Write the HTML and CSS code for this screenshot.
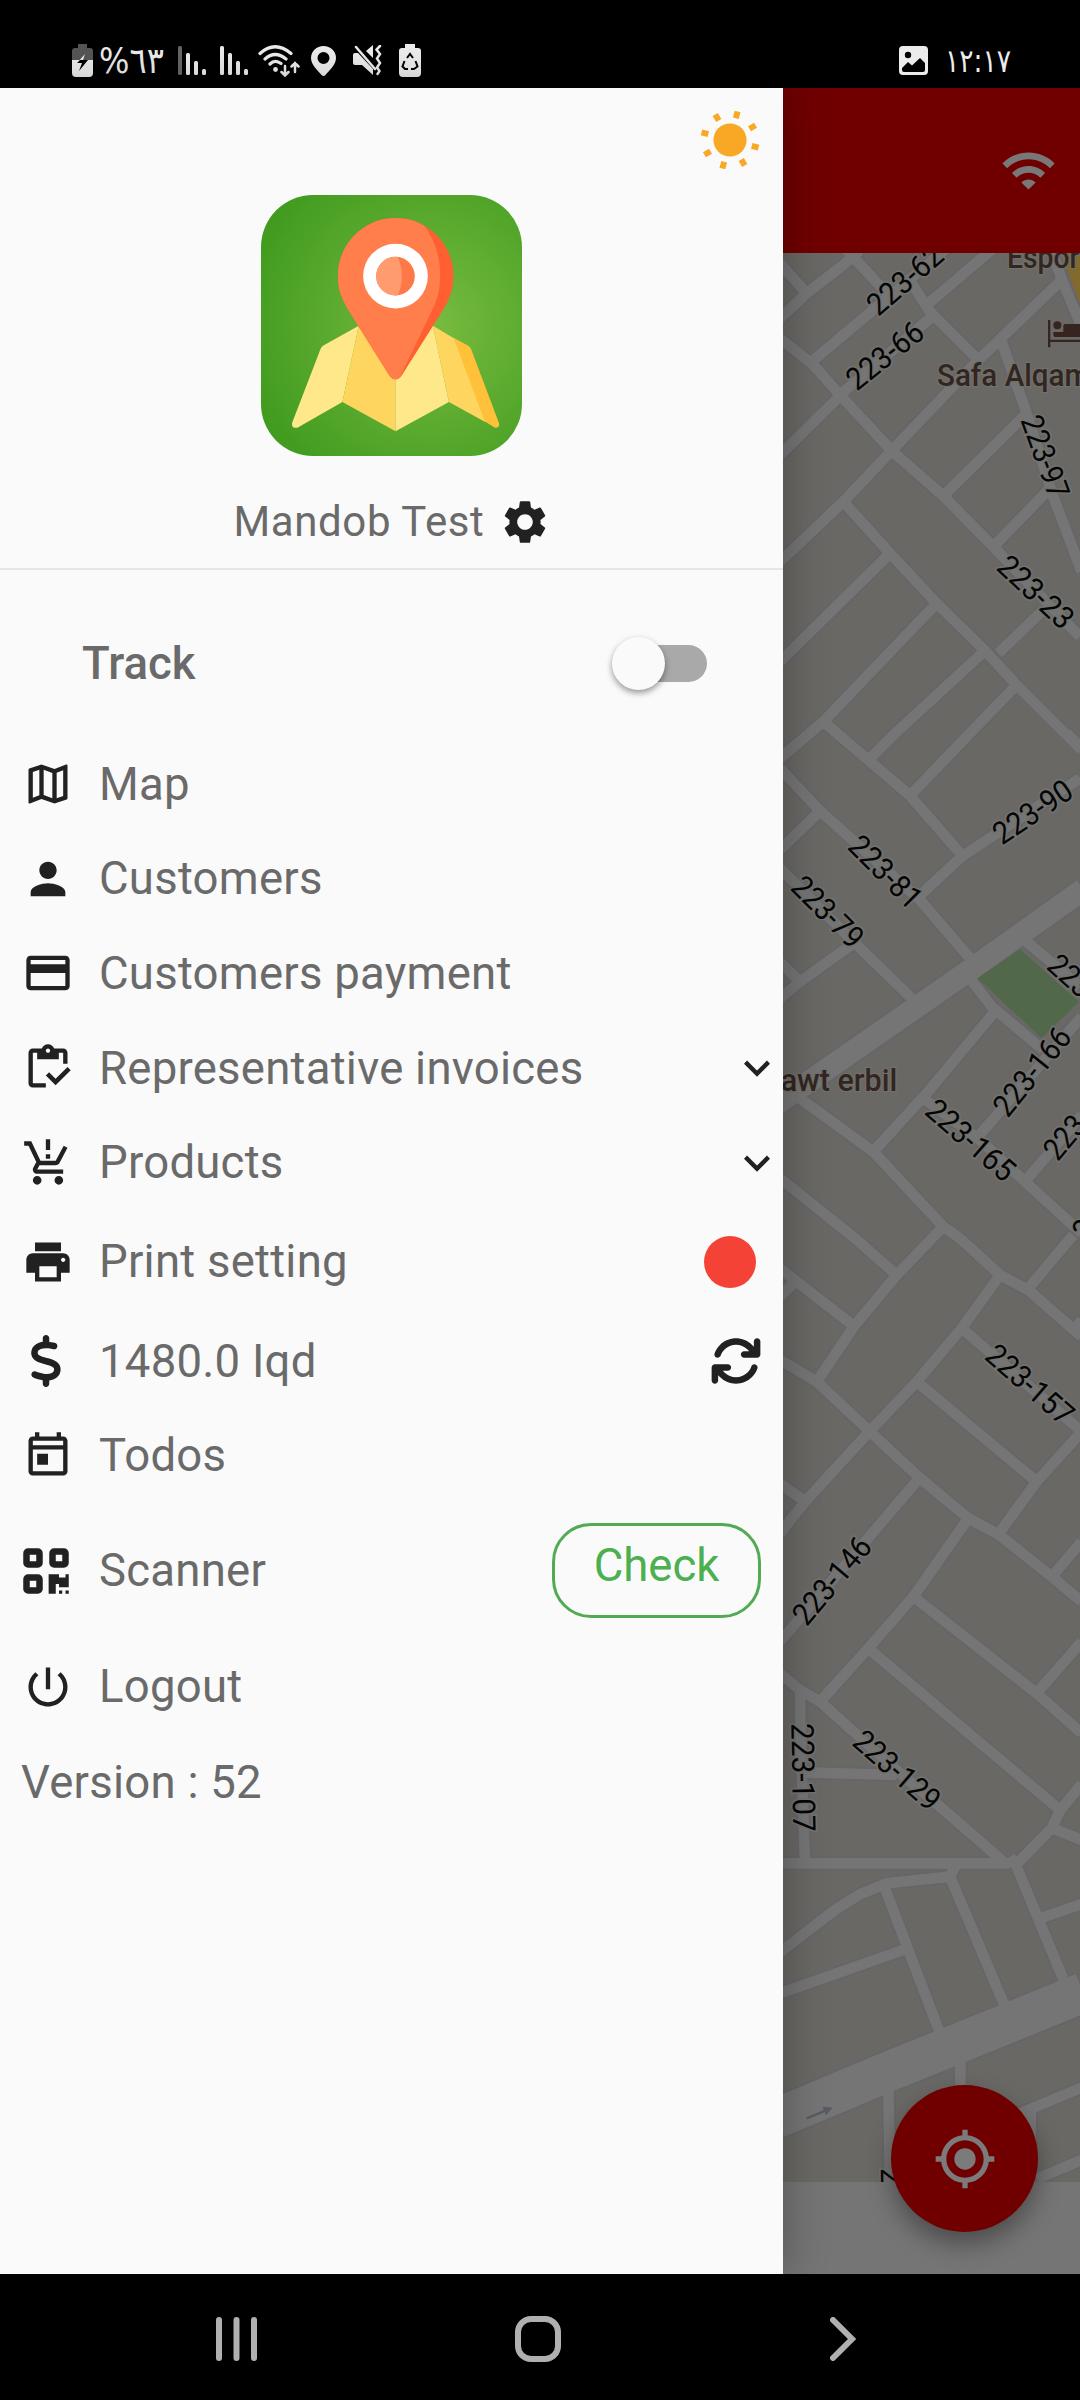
FILE: index.html
```html
<!DOCTYPE html>
<html lang="en">
<head>
<meta charset="utf-8">
<title>Mandob</title>
<link rel="stylesheet" href="styles.css">
</head>
<body>
<div class="screen">
  <header class="status">
    <div class="status-group">
      <svg width="21" height="33" viewBox="0 0 21 33"><path d="M6 0h9v4h3a3 3 0 0 1 3 3v9H0V7a3 3 0 0 1 3-3h3z" fill="#555"/><path d="M0 16h21v13a4 4 0 0 1-4 4H4a4 4 0 0 1-4-4z"/><path d="M13 10L5 19h5" fill="#ececec"/><path d="M5 19l3-3h8l-9 11 3-8z" fill="#000"/></svg>
      <span class="battery-text"><bdo dir="ltr">%٦٣</bdo></span>
      <svg class="ml15" width="28" height="29" viewBox="0 0 28 29"><rect width="4" height="29" rx="1.5" fill="#666"/><rect x="8" y="7" width="4" height="22" rx="1.5"/><rect x="16" y="15" width="4" height="14" rx="1.5"/><rect x="24" y="23" width="4" height="6" rx="1.5"/></svg>
      <svg class="ml14" width="28" height="29" viewBox="0 0 28 29"><rect width="4" height="29" rx="1.5"/><rect x="8" y="7" width="4" height="22" rx="1.5"/><rect x="16" y="15" width="4" height="14" rx="1.5"/><rect x="24" y="23" width="4" height="6" rx="1.5"/></svg>
      <svg class="ml10" width="42" height="32" viewBox="0 0 42 32"><g fill="none" stroke="#ececec" stroke-width="3.2" stroke-linecap="round"><path d="M2 8.500Q17-5 33 8.500M7 14Q17 5 28 14M12 19Q17 14 23 18.500"/><path d="M27 21v9M23.500 27l3.500 3.500 3.500-3.500M37 27v-9M33.500 21.500L37 18l3.500 3.500" stroke-width="2.500"/></g><circle cx="17.500" cy="24.500" r="2.400"/></svg>
      <svg class="ml11" width="25" height="30" viewBox="0 0 25 30"><path fill-rule="evenodd" d="M12.500 0C5.500 0 0 5.200 0 12c0 7 7 12.500 10.500 17q2 2 4 0C18 24.500 25 19 25 12 25 5.200 19.500 0 12.500 0zm0 6a6 6 0 1 1 0 12 6 6 0 0 1 0-12z"/></svg>
      <svg class="ml17" width="29" height="31" viewBox="0 0 29 31"><path d="M13 6l7-6v13zM0 10q0-2 2-2h3l15 16v6L9 20H2q-2 0-2-2z"/><path d="M3 2l19 22M27 1l-3.500 3.500L27 9l-3 4.500 3 4.500-3 4.500 2.500 3.500-2 3" fill="none" stroke="#ececec" stroke-width="2.500" stroke-linecap="round"/></svg>
      <svg class="ml17" width="22" height="33" viewBox="0 0 22 33"><path d="M6 0h10v4h3a3 3 0 0 1 3 3v22a4 4 0 0 1-4 4H4a4 4 0 0 1-4-4V7a3 3 0 0 1 3-3h3z"/><path d="M8 14l3-4 3 4M16.500 17l2 5.500L15 25h-3M5.500 17l-2 5.500L6 25h3" fill="none" stroke="#000" stroke-width="2"/></svg>
    </div>
    <div class="status-group">
      <svg width="29" height="29" viewBox="0 0 29 29"><rect width="29" height="29" rx="4"/><circle cx="9" cy="9" r="3.200" fill="#000"/><path d="M3 22l6-6 4 3.500 8-7.500 5 5v7q0 2-2 2H5q-2 0-2-2z" fill="#000"/></svg>
      <span class="clock"><bdo dir="ltr">١٢:١٧</bdo></span>
    </div>
  </header>

  <main class="content">
    <aside class="drawer">
      <div class="profile">
        <div class="theme">
          <svg width="60" height="60" viewBox="-30 -30 60 60" fill="#f9a825"><circle r="16.600"/><g><path id="ray" d="M22.500-3h7v6h-7z" transform="rotate(15)"/><use href="#ray" transform="rotate(45)"/><use href="#ray" transform="rotate(90)"/><use href="#ray" transform="rotate(135)"/><use href="#ray" transform="rotate(180)"/><use href="#ray" transform="rotate(225)"/><use href="#ray" transform="rotate(270)"/><use href="#ray" transform="rotate(315)"/></g></svg>
        </div>
        <svg class="logo" width="261" height="261" viewBox="123 105 782 782">
          <defs>
            <radialGradient id="green" cx=".65" cy=".5" r=".75"><stop offset="0" stop-color="#78bc40"/><stop offset="1" stop-color="#3f9a1e"/></radialGradient>
            <clipPath id="disc"><circle cx="526" cy="348" r="58"/></clipPath>
            <clipPath id="pin"><path d="M526 174c96 0 174 78 174 174 0 40-14 74-34 105L545 645q-19 26-38 0L387 453c-20-31-34-65-34-105 0-96 78-174 173-174z"/></clipPath>
          </defs>
          <rect x="123" y="105" width="782" height="782" rx="156" fill="url(#green)"/>
          <path d="M416 497L310 556q-6 4-8 9L216 788q-2 18 16 14L367 725z" fill="#ffe88a"/>
          <path d="M416 497L367 725 526 813V497z" fill="#fed55e"/>
          <path d="M638 497l48 228-160 88V497z" fill="#ffe88a"/>
          <path d="M638 497l68 40 90 249-110-61z" fill="#fed55e"/>
          <path d="M700 533l44 24q6 4 8 9l84 222q4 14-12 14l-30-18z" fill="#ffc03a"/>
          <g clip-path="url(#pin)"><path d="M340 160h380v510H340z" fill="#ff5f31"/><path d="M300 150h262c60 40 98 110 98 198q0 60-28 110L530 670H300z" fill="#ff7e4b"/></g>
          <circle cx="526" cy="348" r="97" fill="#fff"/>
          <g clip-path="url(#disc)"><path d="M460 280h140v140H460z" fill="#ff7948"/><path d="M460 280h68q34 68 0 136h-68z" fill="#ff9b6e"/></g>
        </svg>
        <div class="name-row">
          <span class="name">Mandob Test</span>
          <svg class="icon" viewBox="0 0 24 24"><path d="M19.140 12.940c.04-.3.060-.61.060-.94 0-.32-.02-.64-.07-.94l2.030-1.580c.18-.14.23-.41.12-.61l-1.920-3.320c-.12-.22-.37-.29-.59-.22l-2.390.96c-.5-.38-1.030-.7-1.620-.94l-.36-2.540c-.04-.24-.24-.41-.48-.41h-3.840c-.24 0-.43.17-.47.41l-.36 2.540c-.59.24-1.130.57-1.620.94l-2.390-.96c-.22-.08-.47 0-.59.22L2.740 8.870c-.12.21-.08.47.12.61l2.030 1.580c-.05.3-.09.63-.09.94s.02.64.07.94l-2.030 1.580c-.18.14-.23.41-.12.61l1.920 3.320c.12.22.37.29.59.22l2.390-.96c.5.38 1.030.7 1.620.94l.36 2.540c.05.24.24.41.48.41h3.840c.24 0 .44-.17.47-.41l.36-2.540c.59-.24 1.130-.56 1.620-.94l2.390.96c.22.08.47 0 .59-.22l1.920-3.320c.12-.22.07-.47-.12-.61zM12 15.600c-1.980 0-3.600-1.620-3.600-3.600s1.620-3.600 3.600-3.600 3.600 1.620 3.600 3.600-1.620 3.600-3.600 3.600z"/></svg>
        </div>
      </div>

      <div class="track"><span class="track-label">Track</span><span class="switch"><span class="thumb"></span></span></div>

      <nav class="menu">
        <div class="item"><svg class="icon" viewBox="0 0 24 24"><path d="M20.500 3l-.16.030L15 5.100 9 3 3.360 4.900c-.21.070-.36.250-.36.480V20.500c0 .28.220.5.500.5l.16-.03L9 18.900l6 2.100 5.640-1.900c.21-.07.360-.25.360-.48V3.500c0-.28-.22-.5-.5-.5zM10 5.470l4 1.400v11.660l-4-1.400V5.470zm-5 .99l3-1.010v11.700l-3 1.160V6.460zm14 11.080l-3 1.010V6.860l3-1.160v11.840z"/></svg><span class="label">Map</span></div>
        <div class="item"><svg class="icon" viewBox="0 0 24 24"><path d="M12 12c2.210 0 4-1.790 4-4s-1.790-4-4-4-4 1.790-4 4 1.790 4 4 4zm0 2c-2.670 0-8 1.340-8 4v2h16v-2c0-2.660-5.330-4-8-4z"/></svg><span class="label">Customers</span></div>
        <div class="item"><svg class="icon" viewBox="0 0 24 24"><path d="M20 4H4c-1.110 0-1.990.89-1.990 2L2 18c0 1.110.89 2 2 2h16c1.110 0 2-.89 2-2V6c0-1.110-.89-2-2-2zm0 14H4v-6h16v6zm0-10H4V6h16v2z"/></svg><span class="label">Customers payment</span></div>
        <div class="item"><svg class="icon" viewBox="0 0 24 24"><path d="M5 5h2v3h10V5h2v5h2V5c0-1.100-.9-2-2-2h-4.180C14.400 1.840 13.300 1 12 1s-2.400.84-2.820 2H5c-1.100 0-2 .9-2 2v14c0 1.100.9 2 2 2h6v-2H5V5zm7-2c.55 0 1 .45 1 1s-.45 1-1 1-1-.45-1-1 .45-1 1-1z"/><path d="M21 11.500L15.510 17l-3.010-3L11 15.500l4.510 4.500L22.500 13z"/></svg><span class="label">Representative invoices</span><svg class="icon chevron" viewBox="0 0 24 24"><path d="M16.590 8.590L12 13.170 7.410 8.590 6 10l6 6 6-6z"/></svg></div>
        <div class="item"><svg class="icon" viewBox="0 0 24 24"><path d="M13 10h-2V8h2v2zm0-4h-2V1h2v5zM7 18c-1.100 0-1.990.9-1.990 2S5.900 22 7 22s2-.9 2-2-.9-2-2-2zm10 0c-1.100 0-1.990.9-1.990 2s.89 2 1.990 2 2-.9 2-2-.9-2-2-2zm-8.900-5h7.450c.75 0 1.410-.41 1.750-1.030L21 4.960 19.250 4l-3.700 7H8.530L4.270 2H1v2h2l3.600 7.590-1.350 2.440C4.520 15.370 5.480 17 7 17h12v-2H7l1.100-2z"/></svg><span class="label">Products</span><svg class="icon chevron" viewBox="0 0 24 24"><path d="M16.590 8.590L12 13.170 7.410 8.590 6 10l6 6 6-6z"/></svg></div>
        <div class="item item-print"><svg class="icon" viewBox="0 0 24 24"><path d="M19 8H5c-1.660 0-3 1.340-3 3v6h4v4h12v-4h4v-6c0-1.660-1.340-3-3-3zm-3 11H8v-5h8v5zm3-7c-.55 0-1-.45-1-1s.45-1 1-1 1 .45 1 1-.45 1-1 1zm-1-9H6v4h12V3z"/></svg><span class="label">Print setting</span><span class="dot"></span></div>
        <div class="item"><svg class="icon dollar" viewBox="-96 0 512 512"><path d="M160 0c17.700 0 32 14.300 32 32V67.700c1.600.2 3.100.4 4.700.7.4.1.7.1 1.100.2l48 8.800c17.400 3.200 28.900 19.900 25.700 37.200s-19.900 28.900-37.200 25.700l-47.500-8.700c-31.300-4.600-58.900-1.500-78.300 6.200s-27.200 18.300-29 28.100c-2 10.700-.5 16.700 1.200 20.400 1.800 3.900 5.500 8.300 12.800 13.200 16.300 10.700 41.300 17.700 73.700 26.300l2.900.8c28.600 7.600 63.600 16.800 89.600 33.800 14.200 9.300 27.600 21.900 35.900 39.500 8.500 17.900 10.300 37.900 6.400 59.200-6.900 38-33.100 63.400-65.600 76.700-13.700 5.600-28.600 9.200-44.400 11V480c0 17.700-14.300 32-32 32s-32-14.300-32-32V445.100c-.4-.1-.9-.1-1.300-.2h-.2c-24.400-3.800-64.500-14.300-91.500-26.300-16.100-7.200-23.400-26.100-16.200-42.200s26.100-23.400 42.200-16.200c20.900 9.300 55.300 18.500 75.200 21.600 31.900 4.700 58.200 2 76-5.300 16.900-6.900 24.600-16.900 26.800-28.900 1.900-10.600.4-16.700-1.300-20.400-1.900-4-5.600-8.400-13-13.300-16.400-10.700-41.500-17.700-74-26.300l-2.800-.7C119.400 279.300 84.400 270 58.400 253c-14.200-9.300-27.500-22-35.800-39.600-8.400-17.900-10.100-37.900-6.100-59.200C23.700 116 52.300 91.200 84.800 78.300c13.300-5.300 27.900-8.900 43.200-11V32c0-17.700 14.300-32 32-32z"/></svg><span class="label">1480.0 Iqd</span><svg class="icon refresh" viewBox="0 0 512 512"><path d="M105.100 202.600c7.700-21.800 20.200-42.300 37.800-59.800 62.500-62.500 163.800-62.500 226.300 0L386.300 160H336c-17.700 0-32 14.300-32 32s14.300 32 32 32H463.900c17.700 0 32-14.300 32-32V64c0-17.700-14.300-32-32-32s-32 14.300-32 32v51.200L414.400 97.600c-87.500-87.500-229.300-87.500-316.800 0C73.200 122 55.600 150.700 44.800 181.400c-5.900 16.700 2.900 34.900 19.500 40.800s34.900-2.900 40.800-19.500zM39 289.300c-5 1.500-9.800 4.200-13.700 8.200-4 4-6.700 8.800-8.100 14-.3 1.200-.6 2.500-.8 3.800-.3 1.700-.4 3.400-.4 5.100V448c0 17.700 14.300 32 32 32s32-14.300 32-32V396.900l17.600 17.500c87.500 87.400 229.300 87.400 316.700 0 24.400-24.400 42.100-53.100 52.900-83.700 5.900-16.700-2.900-34.900-19.500-40.800s-34.900 2.900-40.800 19.500c-7.700 21.800-20.200 42.300-37.800 59.800-62.500 62.500-163.800 62.500-226.300 0l-.1-.1L125.600 352H176c17.700 0 32-14.300 32-32s-14.300-32-32-32H48.400c-1.600 0-3.200.1-4.800.3s-3.100.5-4.600 1z"/></svg></div>
        <div class="item"><svg class="icon" viewBox="0 0 24 24"><path d="M19 3h-1V1h-2v2H8V1H6v2H5c-1.110 0-1.990.9-1.990 2L3 19c0 1.100.89 2 2 2h14c1.100 0 2-.9 2-2V5c0-1.100-.9-2-2-2zm0 16H5V9h14v10zm0-12H5V5h14v2zM7 11h5v5H7z"/></svg><span class="label">Todos</span></div>
        <div class="item item-scanner"><svg class="icon qr" viewBox="-32 0 512 512"><path fill-rule="evenodd" d="M48 32h96a48 48 0 0 1 48 48v96a48 48 0 0 1-48 48H48a48 48 0 0 1-48-48V80a48 48 0 0 1 48-48zm16 64v64h64V96zM304 32h96a48 48 0 0 1 48 48v96a48 48 0 0 1-48 48h-96a48 48 0 0 1-48-48V80a48 48 0 0 1 48-48zm16 64v64h64V96zM48 288h96a48 48 0 0 1 48 48v96a48 48 0 0 1-48 48H48a48 48 0 0 1-48-48v-96a48 48 0 0 1 48-48zm16 64v64h64v-64zM250 288h102v32h64v-32h32v128h-96v-32h-32v96h-70zM352 448h32v32h-32zM416 448h32v32h-32z"/></svg><span class="label">Scanner</span><span class="check">Check</span></div>
        <div class="item item-logout"><svg class="icon" viewBox="0 0 24 24"><path d="M13 3h-2v10h2V3zm4.830 2.170l-1.420 1.420C17.990 7.860 19 9.810 19 12c0 3.870-3.130 7-7 7s-7-3.130-7-7c0-2.190 1.010-4.140 2.580-5.420L6.170 5.170C4.230 6.820 3 9.260 3 12c0 4.970 4.030 9 9 9s9-4.030 9-9c0-2.740-1.230-5.180-3.170-6.830z"/></svg><span class="label">Logout</span></div>
        <div class="item"><span class="label">Version : 52</span></div>
      </nav>
    </aside>

    <section class="page">
      <div class="appbar"><svg width="57" height="57" viewBox="0 0 24 24" fill="#787878"><path d="M1 9l2 2c4.970-4.970 13.030-4.970 18 0l2-2C16.930 2.930 7.080 2.930 1 9zm8 8l3 3 3-3c-1.650-1.660-4.340-1.660-6 0zm-4-4l2 2c2.760-2.760 7.240-2.760 10 0l2-2C15.140 9.140 8.870 9.140 5 13z"/></svg></div>
      <svg class="map" viewBox="783 253 297 1929">
        <defs>
          <g id="roads" fill="none">
            <path d="M195 25L335 175M385 115L450 215 600 365M0 70L80 160M0 235L80 160 190 75 240 30M95 365L500 25M180 465L450 235M440 195L640 25M0 295L100 375 180 465 335 632 490 768 640 920 900 1190M0 645L180 468M0 965L190 785 335 632 590 365 840 125M810 20L850 130 905 260M665 305L740 520 820 770 905 995M490 768L740 520M640 920L810 745M190 785L330 940 470 1090 615 1232 710 1335 905 1530M0 1265L330 940M0 1555L130 1445 470 1090M130 1445L265 1560 390 1667 545 1845M265 1560L340 1485 615 1232M390 1667L560 1490 710 1335M655 1240L790 1110"/>
            <path d="M860 1480L905 1525M0 1585L120 1713 420 1980 570 2155M0 1830L120 1713M0 1885L60 1945 225 2110 400 2280M0 2275L60 2225 220 2110M0 2165L60 2225M410 1975L545 1850 900 1615M740 2105L900 2240M570 2215L635 2300 790 2430M280 2735L440 2560 640 2320M590 2695L905 2330M430 2575L600 2700 735 2825 905 2980M735 2825L905 2625M60 2575L280 2735 490 2960 540 2995 660 3105 745 3150 905 3290M0 2815L225 2995 350 3105M490 2960L350 3105 225 3255 110 3425"/>
            <path d="M0 3085L50 3125 225 3260M0 3170L45 3125M0 3360L110 3425 270 3575 415 3710 565 3835 655 3883 815 4010 905 4085M0 3880L75 3785 270 3573 410 3425 545 3265 660 3105M0 3730L75 3785M545 3265L900 3570M410 3425L770 3725M655 3883L770 3725 905 3575M745 3145L880 2985M885 3265L905 3240M815 4010L905 3905M0 4205L420 3712M565 3835L400 4070 265 4225 120 4385M400 4070L770 4360 905 4480M770 4360L905 4205M265 4225L590 4500 840 4710M0 4300L60 4350 120 4385 360 4600 480 4700 670 4865M60 4350L62 4500 75 4870"/>
            <path d="M0 4870H690M75 4597L350 4605M905 4632L840 4712 815 4765 710 4872M825 4768L905 4800M690 4850L710 4880 855 5230M790 5032L905 4992M0 5137L165 5010 240 4963 320 4930 510 4910 530 4870M315 4945L480 5380M0 5260L370 5130M510 4910L675 5300M325 5550L330 5840M541 5450V5560M720 5620L905 5543M752 5600V5800M770 5817L905 5760"/>
          </g>
          <path id="avenue" d="M-10 2592L570 2190 910 1948" fill="none"/>
          <path id="highway" d="M-10 5635L320 5497 910 5258" fill="none"/>
          <marker id="tip" viewBox="0 0 10 10" refX="5" refY="5" markerWidth="4" markerHeight="4" orient="auto"><path d="M0 0l10 5L0 10z" fill="#595b62"/></marker>
        </defs>
        <rect x="783" y="253" width="297" height="1929" fill="#6a6865"/>
        <g transform="translate(780 240) scale(.33333)">
          <path d="M840 30h70v190z" fill="#82692c"/>
          <g stroke="#65656a"><use href="#roads" stroke-width="41"/><use href="#avenue" stroke-width="76"/><use href="#highway" stroke-width="130"/></g>
          <path d="M720 2128L897 2285 785 2395 593 2215z" fill="#52684a"/>
          <g stroke="#757575"><use href="#roads" stroke-width="32"/><use href="#avenue" stroke-width="66"/><use href="#highway" stroke-width="120"/></g>
          <path d="M80 5635L145 5608" stroke="#595b62" stroke-width="7" marker-end="url(#tip)"/>
          <g class="street">
            <text transform="translate(295 232) rotate(-41)" textLength="268" lengthAdjust="spacingAndGlyphs">223-62</text>
            <text transform="translate(230 455) rotate(-38.500)" textLength="268" lengthAdjust="spacingAndGlyphs">223-66</text>
            <text transform="translate(721 540) rotate(70)" textLength="258" lengthAdjust="spacingAndGlyphs">223-97</text>
            <text transform="translate(645 986) rotate(43)" textLength="275" lengthAdjust="spacingAndGlyphs">223-23</text>
            <text transform="translate(666 1817) rotate(-34)" textLength="266" lengthAdjust="spacingAndGlyphs">223-90</text>
            <text transform="translate(199 1824) rotate(45)" textLength="268" lengthAdjust="spacingAndGlyphs">223-81</text>
            <text transform="translate(28 1946) rotate(45)" textLength="262" lengthAdjust="spacingAndGlyphs">223-79</text>
            <text transform="translate(796 2184) rotate(42)" textLength="142" lengthAdjust="spacingAndGlyphs">223</text>
            <text transform="translate(683 2636) rotate(-51)" textLength="312" lengthAdjust="spacingAndGlyphs">223-166</text>
            <text transform="translate(430 2620) rotate(41)" textLength="320" lengthAdjust="spacingAndGlyphs">223-165</text>
            <text transform="translate(833 2767) rotate(-50)" textLength="142" lengthAdjust="spacingAndGlyphs">223</text>
            <text transform="translate(920 3008) rotate(-50)" textLength="47" lengthAdjust="spacingAndGlyphs">2</text>
            <text transform="translate(610 3355) rotate(41)" textLength="314" lengthAdjust="spacingAndGlyphs">223-157</text>
            <text transform="translate(80 4162) rotate(-50)" textLength="312" lengthAdjust="spacingAndGlyphs">223-146</text>
            <text transform="translate(34 4450) rotate(89)" textLength="326" lengthAdjust="spacingAndGlyphs">223-107</text>
            <text transform="translate(212 4513) rotate(41)" textLength="312" lengthAdjust="spacingAndGlyphs">223-129</text>
            <text transform="translate(302 5785) rotate(89)" textLength="47" lengthAdjust="spacingAndGlyphs">2</text>
          </g>
          <g class="poi">
            <text x="681" y="83" textLength="218" lengthAdjust="spacingAndGlyphs">Espor</text>
            <text x="471" y="438" textLength="460" lengthAdjust="spacingAndGlyphs">Safa Alqam</text>
            <text x="2" y="2554" textLength="350" lengthAdjust="spacingAndGlyphs">awt erbil</text>
          </g>
          <g fill="#35241f"><path d="M804 240h7v59h90v7h-90v16h-7z"/><circle cx="832" cy="256" r="12"/><path d="M820 276h30v-18q0-6 6-6h50v39h-80q-6 0-6-6z"/></g>
        </g>
      </svg>
      <div class="sheet"></div>
      <div class="fab"><svg width="64" height="64" viewBox="0 0 24 24" fill="#7b7b7b"><path d="M12 8c-2.210 0-4 1.790-4 4s1.790 4 4 4 4-1.790 4-4-1.790-4-4-4zm8.940 3c-.46-4.170-3.770-7.480-7.940-7.940V1h-2v2.060C6.830 3.520 3.520 6.830 3.060 11H1v2h2.060c.46 4.170 3.770 7.480 7.940 7.940V23h2v-2.060c4.170-.46 7.480-3.770 7.940-7.940H23v-2h-2.060zM12 19c-3.870 0-7-3.130-7-7s3.130-7 7-7 7 3.130 7 7-3.130 7-7 7z"/></svg></div>
    </section>
  </main>

  <footer class="navbar">
    <svg width="42" height="44" viewBox="0 0 42 44" fill="#b0b0b0"><rect width="6" height="44" rx="3"/><rect x="17.500" width="6" height="44" rx="3"/><rect x="35" width="6" height="44" rx="3"/></svg>
    <svg class="home" width="46" height="46" viewBox="0 0 46 46"><rect x="3" y="3" width="40" height="40" rx="13" fill="none" stroke="#b0b0b0" stroke-width="6"/></svg>
    <svg width="26" height="44" viewBox="0 0 26 44"><path d="M3 3l19 19L3 41" fill="none" stroke="#b0b0b0" stroke-width="6" stroke-linecap="round"/></svg>
  </footer>
</div>
</body>
</html>
```
FILE: styles.css
```css
* { box-sizing: border-box; }
body { margin: 0; background: #000; font-family: Roboto, sans-serif; }
svg { display: block; flex: none; }
.screen { width: 1080px; height: 2400px; display: flex; flex-direction: column; overflow: hidden; }

.status { height: 88px; padding: 34px 72px 0; display: flex; justify-content: space-between; color: #ececec; fill: #ececec; font-family: "DejaVu Sans", sans-serif; }
.status-group { height: 53px; display: flex; align-items: center; }
.battery-text { width: 64px; margin-left: 6px; font-size: 36px; line-height: 40px; white-space: nowrap; letter-spacing: -2px; transform: scaleX(.89); transform-origin: left; }
.clock { width: 63px; margin-left: 17px; font-size: 32px; line-height: 40px; letter-spacing: -3px; white-space: nowrap; transform: scaleX(.83); transform-origin: left; }
.ml10 { margin-left: 10px; }
.ml11 { margin-left: 11px; }
.ml14 { margin-left: 14px; }
.ml15 { margin-left: 15px; }
.ml17 { margin-left: 17px; }

.content { height: 2186px; display: grid; grid-template-columns: 783px 297px; }
.drawer { background: #fafafa; color: #6a6a6a; z-index: 1; box-shadow: 0 0 42px rgba(0, 0, 0, .3); }
.profile { height: 482px; border-bottom: 2px solid #e6e6e6; display: flex; flex-direction: column; align-items: center; }
.theme { align-self: flex-end; padding: 22px 23.500px 0 0; height: 107px; }
.name-row { display: flex; align-items: center; gap: 15px; margin-top: 40px; padding-left: 2px; }
.name { font-size: 42px; line-height: 52px; letter-spacing: .6px; }
.icon { width: 52px; height: 52px; fill: #212121; }

.track { height: 167px; padding: 20px 76px 0 82px; display: flex; align-items: center; justify-content: space-between; }
.track-label { font-size: 45.500px; font-weight: 500; }
.switch { width: 86px; height: 37px; border-radius: 19px; background: #a9a9a9; display: flex; align-items: center; }
.thumb { width: 53px; height: 53px; flex: none; margin-left: -9px; border-radius: 50%; background: #fafafa; box-shadow: 0 3px 6px rgba(0, 0, 0, .4); }

.item { height: 94.600px; padding: 0 22px 0 22px; display: flex; align-items: center; }
.label { font-size: 45.500px; line-height: 54px; margin-left: 25px; padding-top: 1px; letter-spacing: .25px; white-space: nowrap; }
.label:first-child { margin-left: -1px; }
.icon + .label + * { margin-left: auto; }
.chevron { margin-right: -22px; }
.item-print { height: 104px; }
.dot { width: 52px; height: 52px; margin-right: 5px; border-radius: 50%; background: #f44336; }
.dollar { margin: 0 2px 0 -2px; }
.qr { margin: 0 2px 0 -2px; }
.refresh { margin-right: -1px; }
.item-scanner { height: 135px; }
.item-logout { height: 97px; }
.check { width: 209px; height: 95px; border: 3px solid #51ab55; border-radius: 39px; color: #4caf50; font-size: 45.500px; line-height: 80px; text-align: center; }

.page { position: relative; display: flex; flex-direction: column; background: #757575; overflow: hidden; }
.appbar { height: 165px; background: #700000; display: flex; align-items: center; justify-content: flex-end; padding-right: 23px; }
.map { width: 297px; height: 1929px; }
.street { font-size: 94px; fill: #050505; stroke: #72726f; stroke-width: 10px; paint-order: stroke; font-weight: 400; }
.poi { font-size: 92px; font-weight: 500; fill: #33251f; stroke: #70706c; stroke-width: 8px; paint-order: stroke; }
.sheet { flex: 1; background: #757575; }
.fab { position: absolute; left: 108px; top: 1997px; width: 147px; height: 147px; border-radius: 50%; background: #700000; display: flex; align-items: center; justify-content: center; box-shadow: 0 12px 24px rgba(0, 0, 0, .35); }

.navbar { height: 126px; padding: 4px 224px 0 216px; display: flex; align-items: center; justify-content: space-between; }
.home { margin-right: 12px; }
```
